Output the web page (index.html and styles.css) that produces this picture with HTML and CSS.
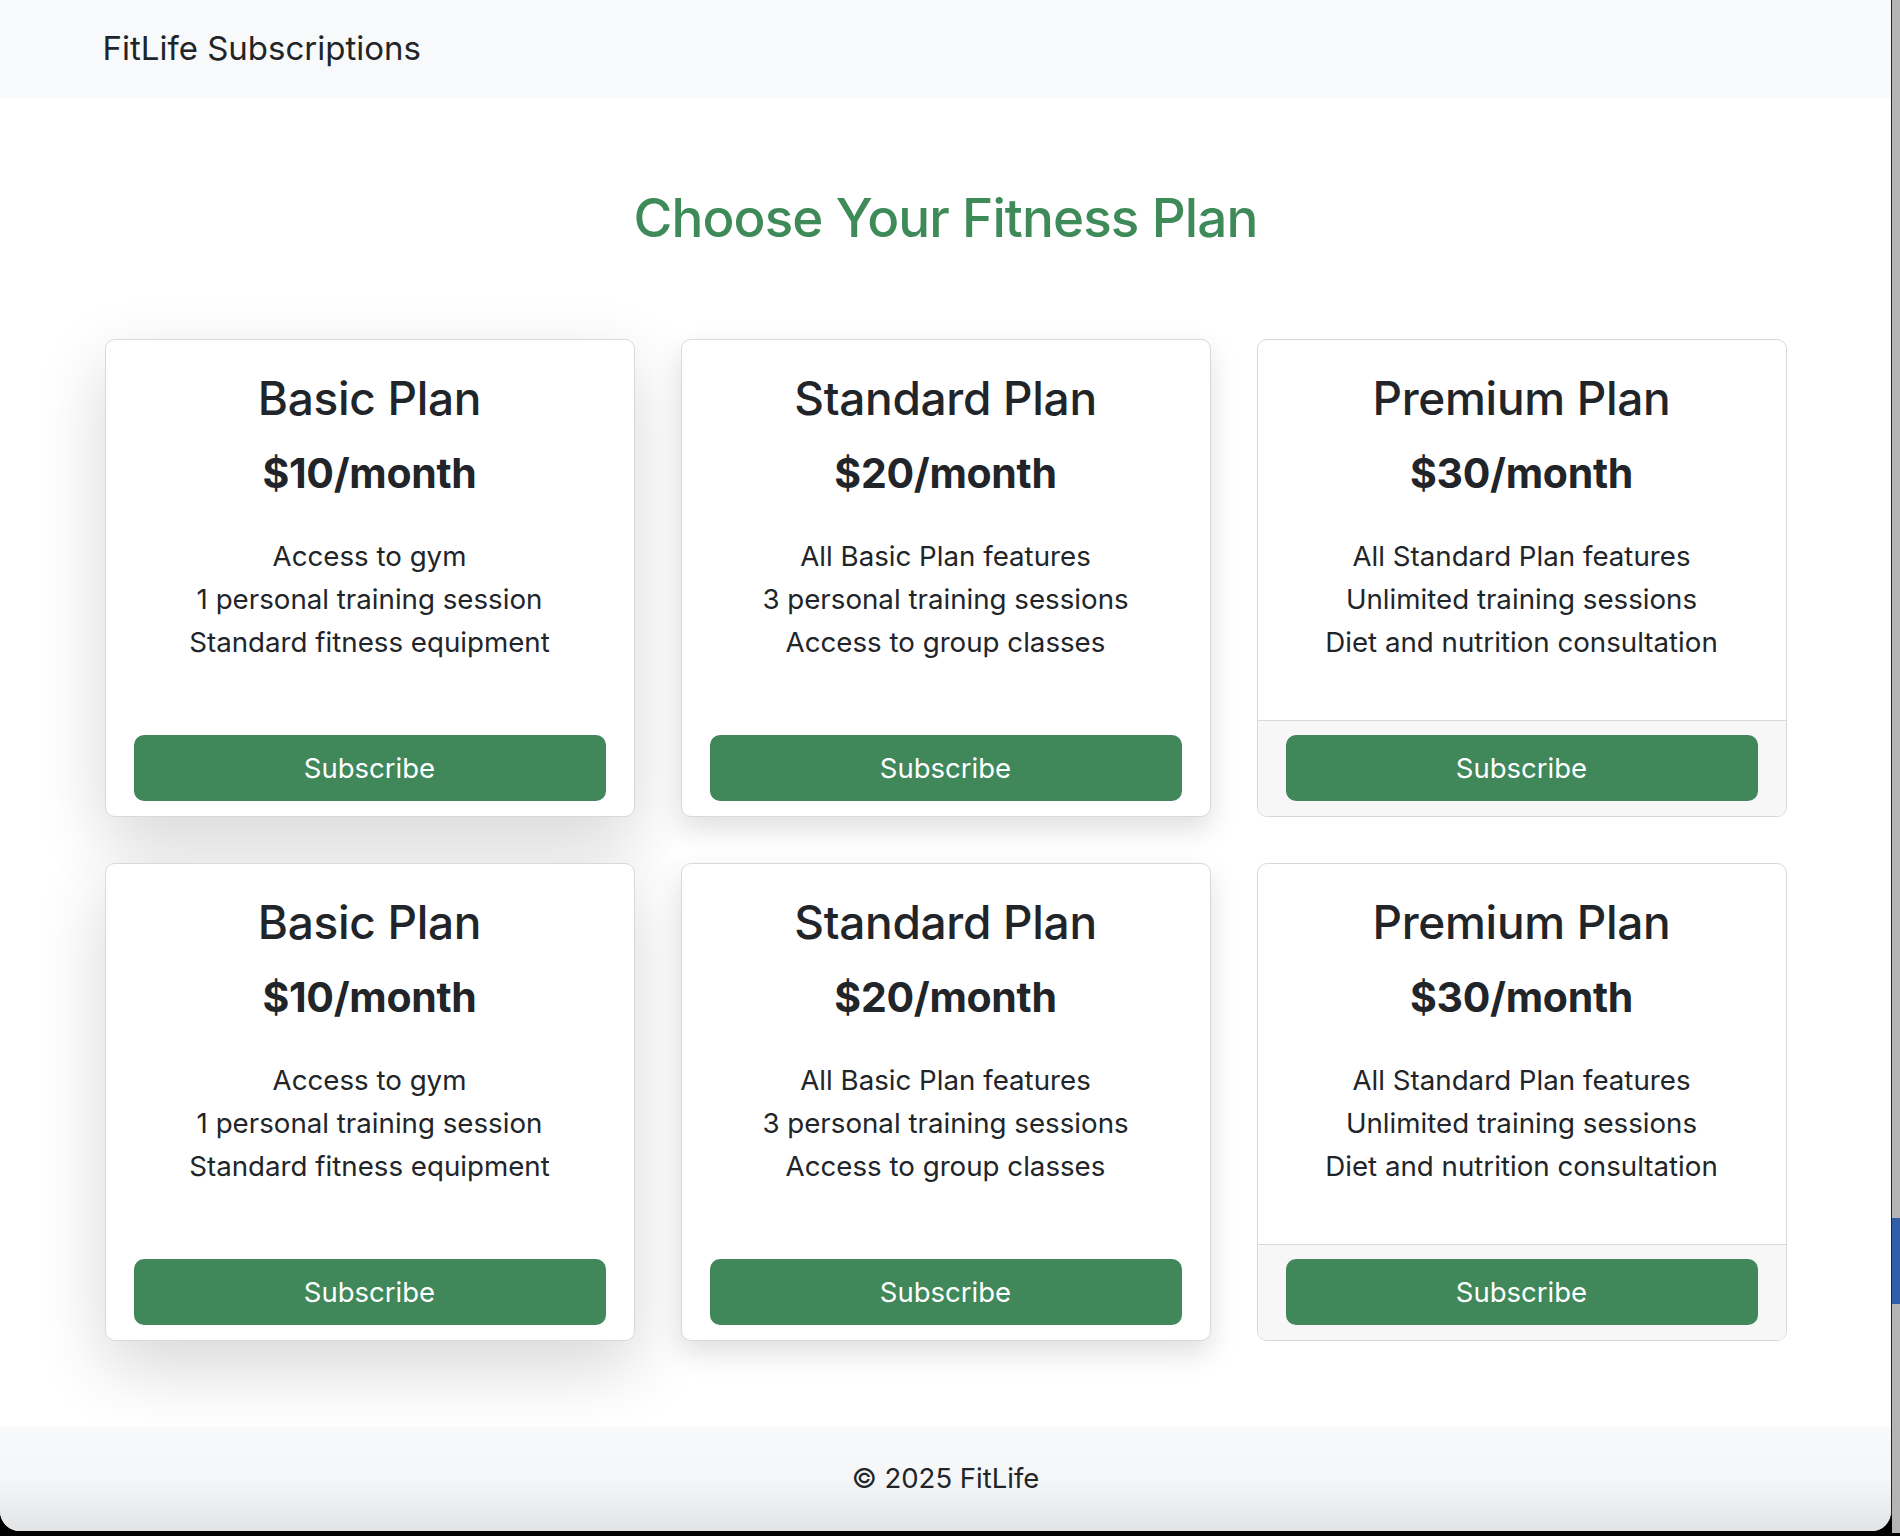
FILE: index.html
```html
<!DOCTYPE html>
<html lang="en">
<head>
<meta charset="utf-8">
<title>FitLife Subscriptions</title>
<link rel="stylesheet" href="styles.css">
</head>
<body>
<div class="window">
  <nav class="navbar">
    <div class="container"><span class="brand">FitLife Subscriptions</span></div>
  </nav>
  <main class="main">
    <div class="container">
      <h1 class="page-title">Choose Your Fitness Plan</h1>
      <div class="plans">
        <div class="card card-lg">
          <div class="card-body">
            <h3 class="card-title">Basic Plan</h3>
            <h4 class="price">$10/month</h4>
            <ul class="features"><li>Access to gym</li><li>1 personal training session</li><li>Standard fitness equipment</li></ul>
            <button class="btn">Subscribe</button>
          </div>
        </div>
        <div class="card card-md">
          <div class="card-body">
            <h3 class="card-title">Standard Plan</h3>
            <h4 class="price">$20/month</h4>
            <ul class="features"><li>All Basic Plan features</li><li>3 personal training sessions</li><li>Access to group classes</li></ul>
            <button class="btn">Subscribe</button>
          </div>
        </div>
        <div class="card">
          <div class="card-body">
            <h3 class="card-title">Premium Plan</h3>
            <h4 class="price">$30/month</h4>
            <ul class="features"><li>All Standard Plan features</li><li>Unlimited training sessions</li><li>Diet and nutrition consultation</li></ul>
          </div>
          <div class="card-footer"><button class="btn">Subscribe</button></div>
        </div>
        <div class="card card-lg">
          <div class="card-body">
            <h3 class="card-title">Basic Plan</h3>
            <h4 class="price">$10/month</h4>
            <ul class="features"><li>Access to gym</li><li>1 personal training session</li><li>Standard fitness equipment</li></ul>
            <button class="btn">Subscribe</button>
          </div>
        </div>
        <div class="card card-md">
          <div class="card-body">
            <h3 class="card-title">Standard Plan</h3>
            <h4 class="price">$20/month</h4>
            <ul class="features"><li>All Basic Plan features</li><li>3 personal training sessions</li><li>Access to group classes</li></ul>
            <button class="btn">Subscribe</button>
          </div>
        </div>
        <div class="card">
          <div class="card-body">
            <h3 class="card-title">Premium Plan</h3>
            <h4 class="price">$30/month</h4>
            <ul class="features"><li>All Standard Plan features</li><li>Unlimited training sessions</li><li>Diet and nutrition consultation</li></ul>
          </div>
          <div class="card-footer"><button class="btn">Subscribe</button></div>
        </div>
      </div>
    </div>
  </main>
  <footer class="footer">© 2025 FitLife</footer>
</div>
<div class="side">
  <div class="side-spacer"></div>
  <div class="side-blue"></div>
</div>
</body>
</html>
```

FILE: styles.css
```css
html, body {
  margin: 0;
  padding: 0;
}
body {
  width: 1900px;
  height: 1536px;
  overflow: hidden;
  background: #000;
  display: flex;
  align-items: flex-start;
  font-family: Inter, "Liberation Sans", sans-serif;
  color: #212529;
}
.window {
  width: 1891px;
  height: 1531px;
  border-right: 1px solid #222;
  background: #fff;
  border-radius: 0 0 20px 20px;
  overflow: hidden;
  display: flex;
  flex-direction: column;
}
.side {
  width: 8px;
  height: 1533px;
  background: #b4b4b4;
  display: flex;
  flex-direction: column;
}
.side-spacer { height: 1218px; }
.side-blue { height: 86px; background: #2f5fa8; }

.container {
  width: 1682px;
  margin: 0 auto;
}
.navbar {
  height: 98px;
  background: #f8f9fa;
  display: flex;
  align-items: center;
  flex-shrink: 0;
}
.brand {
  font-size: 33px;
  line-height: 1;
  display: block;
  margin-top: -2px;
  margin-left: -2px;
}
.main {
  flex: 1;
}
.page-title {
  margin: 0;
  padding-top: 89px;
  height: 153px;
  box-sizing: border-box;
  text-align: center;
  font-size: 53px;
  font-weight: 500;
  line-height: 1.2;
  color: #3e8a59;
  letter-spacing: -0.9px;
}
.plans {
  display: grid;
  grid-template-columns: repeat(3, 530px);
  column-gap: 46px;
  row-gap: 46px;
  margin-top: 88px;
}
.card {
  height: 478px;
  box-sizing: border-box;
  background: #fff;
  border: 1px solid #d9d9d9;
  border-radius: 10px;
  display: flex;
  flex-direction: column;
  overflow: hidden;
  text-align: center;
}
.card-lg { box-shadow: 0 26px 70px rgba(0,0,0,0.16); }
.card-md { box-shadow: 0 12px 28px rgba(0,0,0,0.13); }
.card-body {
  flex: 1;
  display: flex;
  flex-direction: column;
  padding: 31px 28px 15px;
}
.card-title {
  margin: 0;
  font-size: 46px;
  font-weight: 500;
  line-height: 1.2;
  letter-spacing: -0.3px;
}
.price {
  margin: 23px 0 0;
  font-size: 41px;
  font-weight: 700;
  line-height: 1.2;
  letter-spacing: -0.3px;
}
.features {
  list-style: none;
  margin: 37px 0 0;
  padding: 0;
  font-size: 27.7px;
  line-height: 43px;
}
.btn {
  margin-top: auto;
  width: 100%;
  height: 66px;
  border: none;
  border-radius: 10px;
  background: #40875a;
  color: #fff;
  font-family: inherit;
  font-size: 27.5px;
  padding: 0;
}
.card-footer {
  background: #f7f7f7;
  border-top: 1px solid #d9d9d9;
  padding: 14px 28px 15px;
}
.footer {
  height: 104px;
  flex-shrink: 0;
  background: linear-gradient(to bottom, #f8f9fa 0%, #f5f6f7 50%, #e3e4e6 100%);
  display: flex;
  align-items: center;
  justify-content: center;
  font-size: 27.5px;
  padding-bottom: 2px;
  box-sizing: border-box;
}
```
